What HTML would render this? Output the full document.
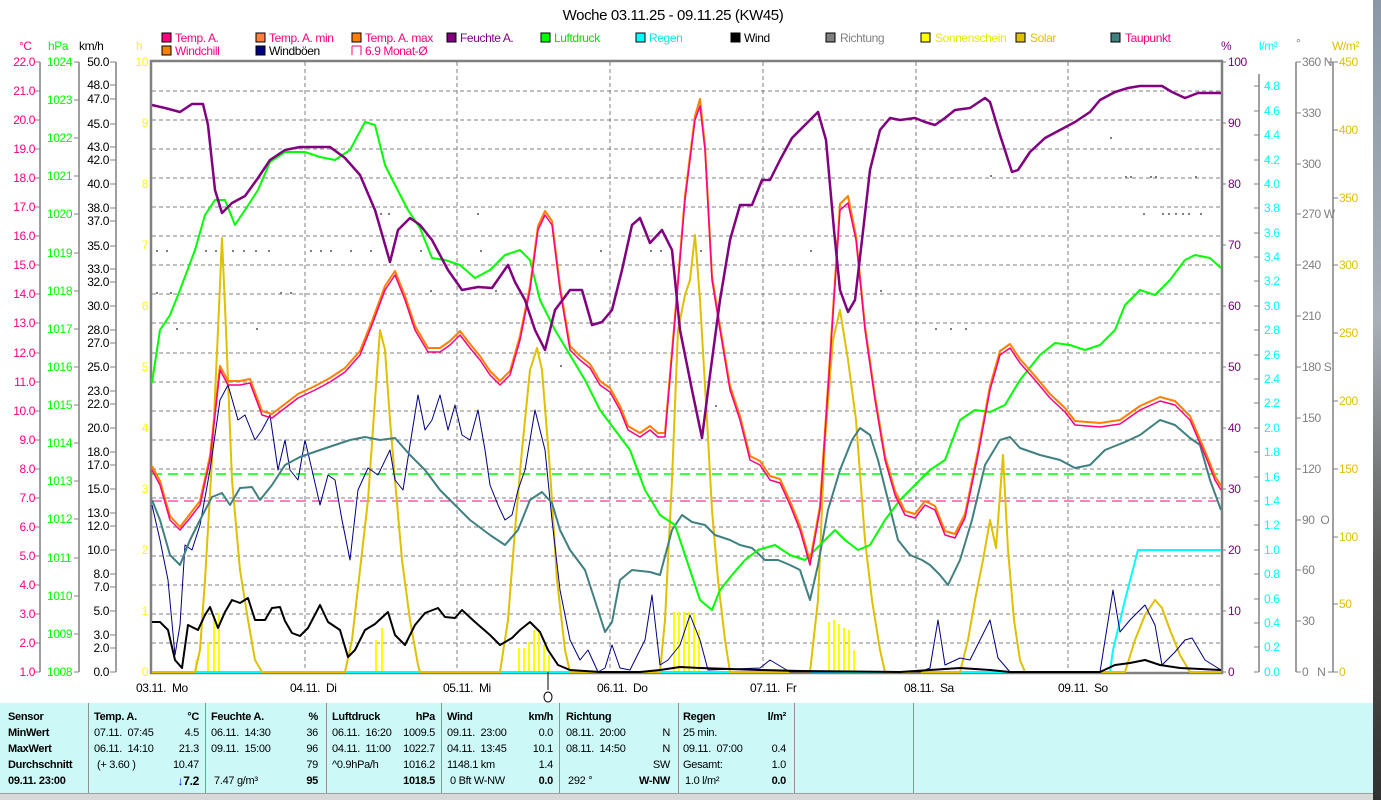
<!DOCTYPE html>
<html><head><meta charset="utf-8"><style>
html,body{margin:0;padding:0;background:#fff;width:1381px;height:800px;overflow:hidden;position:relative}
svg{position:absolute;left:0;top:0}
text{font-family:"Liberation Sans",sans-serif;font-size:12px;letter-spacing:-0.4px}
.tb{position:absolute;left:0;top:703px;width:1373px;height:90px;background:#ccf8f8;font-family:"Liberation Sans",sans-serif;font-size:11px;letter-spacing:-0.3px;color:#000}
.col{position:absolute;top:0;height:90px;border-right:1px solid #909090}
.r{position:absolute;white-space:nowrap}
.b{font-weight:bold}
.foot{position:absolute;left:0;top:793px;width:1373px;height:7px;background:#d8d8d8;border-top:1px solid #a0a0a0}
.photo{position:absolute;left:1373px;top:0;width:8px;height:800px;background:linear-gradient(#8a98a8,#a8b0b8 40%,#5a5a58 70%,#303030)}
</style></head><body>
<svg width="1381" height="800" viewBox="0 0 1381 800">
<text x="673" y="20" text-anchor="middle" style="font-size:15px">Woche 03.11.25 - 09.11.25 (KW45)</text>
<!-- legend -->
<g style="font-size:11px">
<rect x="162" y="33" width="9" height="9" fill="#ff0080" stroke="#000"/><text x="175" y="42" fill="#ff0080">Temp. A.</text>
<rect x="256" y="33" width="9" height="9" fill="#ff8040" stroke="#000"/><text x="269" y="42" fill="#ff0080">Temp. A. min</text>
<rect x="352" y="33" width="9" height="9" fill="#ff8000" stroke="#000"/><text x="365" y="42" fill="#ff0080">Temp. A. max</text>
<rect x="447" y="33" width="9" height="9" fill="#800080" stroke="#000"/><text x="460" y="42" fill="#800080">Feuchte A.</text>
<rect x="541" y="33" width="9" height="9" fill="#00ff00" stroke="#000"/><text x="554" y="42" fill="#00e000">Luftdruck</text>
<rect x="636" y="33" width="9" height="9" fill="#00ffff" stroke="#000"/><text x="649" y="42" fill="#00e8e8">Regen</text>
<rect x="731" y="33" width="9" height="9" fill="#000" stroke="#000"/><text x="744" y="42" fill="#000">Wind</text>
<rect x="826" y="33" width="9" height="9" fill="#808080" stroke="#000"/><text x="840" y="42" fill="#808080">Richtung</text>
<rect x="921" y="33" width="9" height="9" fill="#ffff00" stroke="#000"/><text x="935" y="42" fill="#e8e800">Sonnenschein</text>
<rect x="1016" y="33" width="9" height="9" fill="#e0c000" stroke="#000"/><text x="1030" y="42" fill="#e0c000">Solar</text>
<rect x="1111" y="33" width="9" height="9" fill="#408080" stroke="#000"/><text x="1125" y="42" fill="#ff0080">Taupunkt</text>
<rect x="162" y="46" width="9" height="9" fill="#ff8000" stroke="#000"/><text x="175" y="55" fill="#ff0080">Windchill</text>
<rect x="256" y="46" width="9" height="9" fill="#000080" stroke="#000"/><text x="269" y="55" fill="#000">Windböen</text>
<path d="M352 46h9v9" fill="none" stroke="#ff0080"/><path d="M352 46v9" stroke="#ff0080"/><text x="365" y="55" fill="#ff0080">6.9 Monat-Ø</text>
</g>
<!-- units -->
<g style="font-size:11px">
<text x="19" y="50" fill="#ff0080">°C</text><text x="48" y="50" fill="#00ff00">hPa</text><text x="79" y="50" fill="#000">km/h</text><text x="136" y="50" fill="#ffff00">h</text>
<text x="1221" y="50" fill="#800080">%</text><text x="1259" y="50" fill="#00ffff">l/m²</text><text x="1296" y="47" fill="#808080">°</text><text x="1332" y="50" fill="#e0c000">W/m²</text>
</g>
<!-- grid -->
<g stroke="#808080" stroke-dasharray="4,3" stroke-width="1">
<path d="M152 91H1221M152 120H1221M152 149H1221M152 178H1221M152 207H1221M152 236H1221M152 265H1221M152 294H1221M152 323H1221M152 353H1221M152 382H1221M152 411H1221M152 440H1221M152 469H1221M152 498H1221M152 527H1221M152 556H1221M152 585H1221M152 614H1221M152 643H1221"/>
<path d="M305 62V672M457 62V672M610 62V672M763 62V672M916 62V672M1068 62V672"/>
</g>
<path d="M152 474H1221" stroke="#00ff00" stroke-dasharray="10,6" stroke-width="1.5"/>
<path d="M152 501H1221" stroke="#ff0080" stroke-dasharray="10,6" stroke-width="1"/>
<!-- axes -->
<g stroke="#808080" stroke-width="1.5" fill="none">
<path d="M40 62V672M79 62V672M116 62V672M1259 74V672M1296 62V672M1333 62V672"/>
</g>
<rect x="151" y="61" width="1071" height="612" fill="none" stroke="#808080" stroke-width="2.5"/>
<!-- °C labels -->
<g fill="#ff0080" text-anchor="end">
<text x="35" y="66">22.0</text><text x="35" y="95">21.0</text><text x="35" y="124">20.0</text><text x="35" y="153">19.0</text><text x="35" y="182">18.0</text><text x="35" y="211">17.0</text><text x="35" y="240">16.0</text><text x="35" y="269">15.0</text><text x="35" y="298">14.0</text><text x="35" y="327">13.0</text><text x="35" y="357">12.0</text><text x="35" y="386">11.0</text><text x="35" y="415">10.0</text><text x="35" y="444">9.0</text><text x="35" y="473">8.0</text><text x="35" y="502">7.0</text><text x="35" y="531">6.0</text><text x="35" y="560">5.0</text><text x="35" y="589">4.0</text><text x="35" y="618">3.0</text><text x="35" y="647">2.0</text><text x="35" y="676">1.0</text>
</g>
<g stroke="#808080"><path d="M35 62h5M35 91h5M35 120h5M35 149h5M35 178h5M35 207h5M35 236h5M35 265h5M35 294h5M35 323h5M35 353h5M35 382h5M35 411h5M35 440h5M35 469h5M35 498h5M35 527h5M35 556h5M35 585h5M35 614h5M35 643h5M35 672h5"/>
<path d="M74 62h5M74 100h5M74 138h5M74 176h5M74 214h5M74 253h5M74 291h5M74 329h5M74 367h5M74 405h5M74 443h5M74 481h5M74 519h5M74 558h5M74 596h5M74 634h5M74 672h5"/>
<path d="M110 62h6M110 85h6M110 99h6M110 124h6M110 147h6M110 160h6M110 184h6M110 208h6M110 221h6M110 246h6M110 269h6M110 282h6M110 306h6M110 330h6M110 343h6M110 367h6M110 391h6M110 404h6M110 428h6M110 452h6M110 465h6M110 489h6M110 513h6M110 526h6M110 550h6M110 574h6M110 587h6M110 611h6M110 635h6M110 648h6M110 672h6"/>
<path d="M1221 62h5M1221 123h5M1221 184h5M1221 245h5M1221 306h5M1221 367h5M1221 428h5M1221 489h5M1221 550h5M1221 611h5M1221 672h5"/>
<path d="M1254 86h5M1254 111h5M1254 135h5M1254 160h5M1254 184h5M1254 208h5M1254 233h5M1254 257h5M1254 281h5M1254 306h5M1254 330h5M1254 355h5M1254 379h5M1254 403h5M1254 428h5M1254 452h5M1254 477h5M1254 501h5M1254 525h5M1254 550h5M1254 574h5M1254 599h5M1254 623h5M1254 647h5M1254 672h5"/>
<path d="M1296 62h5M1296 113h5M1296 164h5M1296 214h5M1296 265h5M1296 316h5M1296 367h5M1296 418h5M1296 469h5M1296 520h5M1296 570h5M1296 621h5M1296 672h5"/>
<path d="M1328 62h10M1333 130h5M1333 198h5M1333 265h5M1333 333h5M1333 401h5M1333 469h5M1333 537h5M1333 604h5M1328 672h10"/>
</g>
<g fill="#00ff00">
<text x="47" y="66">1024</text><text x="47" y="104">1023</text><text x="47" y="142">1022</text><text x="47" y="180">1021</text><text x="47" y="218">1020</text><text x="47" y="257">1019</text><text x="47" y="295">1018</text><text x="47" y="333">1017</text><text x="47" y="371">1016</text><text x="47" y="409">1015</text><text x="47" y="447">1014</text><text x="47" y="485">1013</text><text x="47" y="523">1012</text><text x="47" y="562">1011</text><text x="47" y="600">1010</text><text x="47" y="638">1009</text><text x="47" y="676">1008</text>
</g>
<g fill="#000" text-anchor="end">
<text x="109" y="66">50.0</text><text x="109" y="89">48.0</text><text x="109" y="103">47.0</text><text x="109" y="128">45.0</text><text x="109" y="151">43.0</text><text x="109" y="164">42.0</text><text x="109" y="188">40.0</text><text x="109" y="212">38.0</text><text x="109" y="225">37.0</text><text x="109" y="250">35.0</text><text x="109" y="273">33.0</text><text x="109" y="286">32.0</text><text x="109" y="310">30.0</text><text x="109" y="334">28.0</text><text x="109" y="347">27.0</text><text x="109" y="371">25.0</text><text x="109" y="395">23.0</text><text x="109" y="408">22.0</text><text x="109" y="432">20.0</text><text x="109" y="456">18.0</text><text x="109" y="469">17.0</text><text x="109" y="493">15.0</text><text x="109" y="517">13.0</text><text x="109" y="530">12.0</text><text x="109" y="554">10.0</text><text x="109" y="578">8.0</text><text x="109" y="591">7.0</text><text x="109" y="615">5.0</text><text x="109" y="639">3.0</text><text x="109" y="652">2.0</text><text x="109" y="676">0.0</text>
</g>
<g fill="#ffff00" text-anchor="end" style="font-size:11px">
<text x="148" y="66">10</text><text x="148" y="127">9</text><text x="148" y="188">8</text><text x="148" y="249">7</text><text x="148" y="310">6</text><text x="148" y="371">5</text><text x="148" y="432">4</text><text x="148" y="493">3</text><text x="148" y="554">2</text><text x="148" y="615">1</text><text x="148" y="676">0</text>
</g>
<g fill="#800080">
<text x="1228" y="66">100</text><text x="1228" y="127">90</text><text x="1228" y="188">80</text><text x="1228" y="249">70</text><text x="1228" y="310">60</text><text x="1228" y="371">50</text><text x="1228" y="432">40</text><text x="1228" y="493">30</text><text x="1228" y="554">20</text><text x="1228" y="615">10</text><text x="1228" y="676">0</text>
</g>
<g fill="#00ffff">
<text x="1264" y="90">4.8</text><text x="1264" y="115">4.6</text><text x="1264" y="139">4.4</text><text x="1264" y="164">4.2</text><text x="1264" y="188">4.0</text><text x="1264" y="212">3.8</text><text x="1264" y="237">3.6</text><text x="1264" y="261">3.4</text><text x="1264" y="285">3.2</text><text x="1264" y="310">3.0</text><text x="1264" y="334">2.8</text><text x="1264" y="359">2.6</text><text x="1264" y="383">2.4</text><text x="1264" y="407">2.2</text><text x="1264" y="432">2.0</text><text x="1264" y="456">1.8</text><text x="1264" y="481">1.6</text><text x="1264" y="505">1.4</text><text x="1264" y="529">1.2</text><text x="1264" y="554">1.0</text><text x="1264" y="578">0.8</text><text x="1264" y="603">0.6</text><text x="1264" y="627">0.4</text><text x="1264" y="651">0.2</text><text x="1264" y="676">0.0</text>
</g>
<g fill="#808080">
<text x="1302" y="66">360 N</text><text x="1302" y="117">330</text><text x="1302" y="168">300</text><text x="1302" y="218">270 W</text><text x="1302" y="269">240</text><text x="1302" y="320">210</text><text x="1302" y="371">180 S</text><text x="1302" y="422">150</text><text x="1302" y="473">120</text><text x="1302" y="524">90 &#160;O</text><text x="1302" y="574">60</text><text x="1302" y="625">30</text><text x="1302" y="676">0 &#160;&#160;N</text>
</g>
<g fill="#e0c000">
<text x="1339" y="66">450</text><text x="1339" y="134">400</text><text x="1339" y="202">350</text><text x="1339" y="269">300</text><text x="1339" y="337">250</text><text x="1339" y="405">200</text><text x="1339" y="473">150</text><text x="1339" y="541">100</text><text x="1339" y="608">50</text><text x="1339" y="676">0</text>
</g>
<!-- direction dots -->
<g fill="#808080">
<rect x="156" y="250" width="2" height="2"/><rect x="166" y="250" width="2" height="2"/><rect x="176" y="328" width="2" height="2"/><rect x="156" y="292" width="2" height="2"/><rect x="170" y="292" width="2" height="2"/><rect x="205" y="250" width="2" height="2"/><rect x="215" y="250" width="2" height="2"/><rect x="232" y="250" width="2" height="2"/><rect x="243" y="250" width="2" height="2"/><rect x="255" y="250" width="2" height="2"/><rect x="268" y="250" width="2" height="2"/><rect x="256" y="328" width="2" height="2"/><rect x="280" y="292" width="2" height="2"/><rect x="290" y="292" width="2" height="2"/><rect x="310" y="250" width="2" height="2"/><rect x="320" y="250" width="2" height="2"/><rect x="330" y="250" width="2" height="2"/><rect x="350" y="250" width="2" height="2"/><rect x="370" y="250" width="2" height="2"/><rect x="380" y="213" width="2" height="2"/><rect x="388" y="213" width="2" height="2"/><rect x="420" y="250" width="2" height="2"/><rect x="430" y="290" width="2" height="2"/><rect x="477" y="213" width="2" height="2"/><rect x="480" y="250" width="2" height="2"/><rect x="495" y="290" width="2" height="2"/><rect x="520" y="250" width="2" height="2"/><rect x="560" y="365" width="2" height="2"/><rect x="600" y="250" width="2" height="2"/><rect x="650" y="250" width="2" height="2"/><rect x="660" y="250" width="2" height="2"/><rect x="700" y="250" width="2" height="2"/><rect x="715" y="405" width="2" height="2"/><rect x="810" y="250" width="2" height="2"/><rect x="880" y="290" width="2" height="2"/><rect x="935" y="328" width="2" height="2"/><rect x="950" y="328" width="2" height="2"/><rect x="965" y="328" width="2" height="2"/><rect x="990" y="175" width="2" height="2"/><rect x="1110" y="137" width="2" height="2"/><rect x="1125" y="176" width="2" height="2"/><rect x="1130" y="176" width="2" height="2"/><rect x="1150" y="176" width="2" height="2"/><rect x="1155" y="176" width="2" height="2"/><rect x="1195" y="176" width="2" height="2"/><rect x="1143" y="213" width="2" height="2"/><rect x="1162" y="213" width="2" height="2"/><rect x="1168" y="213" width="2" height="2"/><rect x="1175" y="213" width="2" height="2"/><rect x="1182" y="213" width="2" height="2"/><rect x="1188" y="213" width="2" height="2"/><rect x="1200" y="213" width="2" height="2"/>
</g>
<!-- sunshine bars -->
<g stroke="#ffff00" stroke-width="2">
<path d="M196 672V660M208 672V642M214 672V616M219 672V613M376 672V640M382 672V628M519 672V648M524 672V648M529 672V642M534 672V630M539 672V632M544 672V645M549 672V655M674 672V612M679 672V612M684 672V612M689 672V612M694 672V614M699 672V630M829 672V622M834 672V620M839 672V624M844 672V628M849 672V630M854 672V650"/>
</g>
<g fill="none" stroke-linejoin="round">
<!-- rain -->
<polyline stroke="#00ffff" stroke-width="2" points="152,672 1110,672 1113,650 1125,600 1138,550 1221,550"/>
<!-- solar -->
<polyline stroke="#e0c000" stroke-width="2" points="152,672 195,672 200,650 205,580 212,460 218,330 222,238 226,330 232,480 240,570 248,620 255,660 262,672 345,672 352,640 360,570 368,500 375,400 380,330 385,350 390,420 395,480 402,560 410,620 418,665 420,672 500,672 508,620 515,530 522,450 530,370 537,348 542,370 550,470 557,580 565,650 570,672 660,672 665,620 672,480 678,330 685,295 690,280 695,235 700,300 707,420 712,510 718,580 725,640 730,672 810,672 818,600 825,440 833,340 840,310 848,360 856,420 865,540 872,600 880,650 885,672 960,672 968,640 975,600 983,560 990,520 996,548 1003,455 1008,550 1014,620 1020,660 1025,672 1125,672 1135,640 1145,615 1155,600 1162,608 1170,630 1180,655 1190,672 1221,672"/>
<!-- gust -->
<polyline stroke="#000080" stroke-width="1" points="152,505 160,540 168,580 175,655 180,625 185,545 192,550 200,525 210,470 220,400 228,385 238,420 245,415 255,440 262,430 270,415 278,470 285,440 290,470 298,480 305,440 312,470 320,505 328,475 335,480 342,520 350,560 358,490 368,468 378,475 390,450 395,480 403,490 410,445 418,395 425,430 432,420 440,395 448,430 455,405 462,435 470,440 478,410 485,450 490,485 498,505 505,520 512,515 518,490 525,470 535,410 545,450 552,520 560,590 570,640 580,660 588,650 598,672 605,668 612,645 620,668 630,670 645,640 652,595 660,665 668,660 680,645 690,615 700,640 708,670 760,668 770,660 790,672 920,672 930,668 938,620 945,665 960,658 970,660 980,640 990,620 998,658 1010,672 1100,672 1113,590 1120,632 1130,620 1145,605 1155,625 1162,665 1175,652 1185,640 1192,638 1205,660 1221,670"/>
<!-- dew point -->
<polyline stroke="#408080" stroke-width="2" points="152,500 160,520 170,555 180,565 190,540 200,520 212,497 222,493 230,505 240,488 252,487 260,500 272,485 285,465 300,457 320,450 335,445 350,440 365,437 380,440 395,438 410,455 425,470 440,490 455,505 470,520 490,535 505,545 518,530 530,500 542,492 552,503 560,530 570,550 585,570 598,610 605,632 612,622 620,580 632,570 650,572 660,575 672,530 682,515 692,522 705,525 715,535 730,540 740,545 752,548 765,560 778,560 790,565 800,570 810,600 818,565 828,510 840,470 852,440 860,428 870,435 878,460 888,500 898,540 910,555 922,560 930,565 940,575 948,585 960,560 972,520 985,465 1000,440 1010,437 1020,448 1040,455 1060,460 1075,468 1090,465 1105,450 1125,442 1140,435 1160,420 1175,425 1190,438 1200,445 1210,480 1221,510"/>
<!-- pressure -->
<polyline stroke="#00ff00" stroke-width="2" points="152,383 160,330 170,315 180,290 195,250 205,215 215,200 225,200 235,225 245,210 258,190 270,162 285,152 305,152 320,157 335,160 350,150 365,122 375,125 385,165 395,185 408,210 420,228 432,258 445,260 460,265 475,278 490,270 505,255 520,250 530,260 540,300 555,330 570,355 585,380 600,410 615,430 630,450 645,490 660,515 675,525 690,570 700,600 712,610 720,590 732,575 745,560 758,550 775,545 790,555 805,560 820,545 835,530 845,540 858,550 870,545 885,520 900,500 915,485 930,470 945,460 960,420 975,410 990,412 1005,405 1020,380 1040,355 1055,343 1070,345 1085,350 1100,345 1115,330 1125,305 1140,290 1155,295 1170,280 1185,260 1195,255 1210,258 1221,268"/>
<!-- temp -->
<polyline stroke="#ff8000" stroke-width="2" points="152,466 160,481 170,516 180,527 190,514 200,501 210,456 220,366 228,381 240,381 250,379 262,411 272,414 285,404 298,394 315,386 330,378 345,368 360,351 372,321 385,286 395,271 405,296 415,326 428,348 440,348 450,341 460,331 470,344 480,356 490,371 500,381 510,371 520,336 530,286 538,226 545,211 552,221 560,286 570,346 580,356 590,364 600,381 610,388 620,406 628,426 640,433 650,426 658,433 665,433 675,316 685,196 695,116 700,99 705,146 712,276 720,326 730,386 740,416 750,456 760,461 770,476 780,479 790,501 800,526 810,561 820,506 830,356 840,204 848,196 856,236 865,326 875,396 885,456 895,491 905,511 915,514 925,501 935,506 945,531 955,534 965,514 978,451 990,386 1000,351 1010,344 1020,359 1035,376 1050,394 1065,408 1075,421 1100,423 1120,420 1140,406 1160,397 1175,401 1190,416 1205,451 1215,476 1221,486"/>
<polyline stroke="#ff0080" stroke-width="1.5" points="152,470 160,485 170,520 180,530 190,518 200,505 210,460 220,370 228,385 240,385 250,383 262,415 272,418 285,408 298,398 315,390 330,382 345,372 360,355 372,325 385,290 395,275 405,300 415,330 428,352 440,352 450,345 460,335 470,348 480,360 490,375 500,385 510,375 520,340 530,290 538,230 545,215 552,225 560,290 570,350 580,360 590,368 600,385 610,392 620,410 628,430 640,437 650,430 658,437 665,437 675,320 685,200 695,120 700,106 705,150 712,280 720,330 730,390 740,420 750,460 760,465 770,480 780,483 790,505 800,530 810,565 820,510 830,360 840,210 848,203 856,240 865,330 875,400 885,460 895,495 905,515 915,518 925,505 935,510 945,535 955,538 965,518 978,455 990,390 1000,355 1010,348 1020,363 1035,380 1050,398 1065,412 1075,425 1100,427 1120,424 1140,410 1160,401 1175,405 1190,420 1205,455 1215,480 1221,490"/>
<!-- wind -->
<polyline stroke="#000" stroke-width="2" points="152,622 160,622 168,630 175,660 182,668 188,625 198,630 205,615 210,607 218,628 225,612 232,600 240,603 248,598 255,620 265,620 272,608 280,607 285,621 292,633 300,636 308,628 320,605 328,622 340,630 348,657 355,650 365,630 375,624 388,612 395,635 405,645 415,625 425,613 438,608 445,617 455,618 462,610 475,622 490,635 500,645 512,638 520,630 530,622 540,632 548,650 558,665 570,670 600,672 640,672 660,670 680,667 700,668 760,670 800,671 900,672 960,668 990,670 1010,672 1100,672 1115,665 1130,663 1145,660 1160,665 1180,668 1221,670"/>
<!-- humidity -->
<polyline stroke="#800080" stroke-width="2.5" points="152,105 165,108 180,112 192,104 203,104 208,125 215,190 222,213 232,203 245,196 258,178 270,160 285,150 300,147 330,147 345,158 360,175 375,210 390,262 398,230 410,218 420,225 432,240 448,270 462,290 478,287 492,288 508,265 515,282 525,300 535,330 545,350 555,310 570,290 582,290 592,325 602,322 612,310 622,270 632,225 640,218 650,243 662,230 672,250 680,330 692,390 702,438 710,375 720,300 730,240 740,205 752,205 762,180 770,180 780,160 792,138 805,125 818,112 826,140 834,230 840,290 848,312 855,300 862,240 870,170 880,130 890,118 900,120 915,118 925,122 935,125 945,118 955,110 970,108 985,98 990,102 1000,135 1012,172 1018,170 1030,152 1045,138 1060,130 1075,122 1090,112 1100,100 1115,92 1128,88 1140,86 1162,86 1172,92 1185,98 1198,93 1221,93"/>
</g>
<path d="M548 672v18" stroke="#000"/>
<!-- x labels -->
<g fill="#000">
<text x="136" y="692">03.11.&#160; Mo</text><text x="290" y="692">04.11.&#160; Di</text><text x="443" y="692">05.11.&#160; Mi</text><text x="597" y="692">06.11.&#160; Do</text><text x="750" y="692">07.11.&#160; Fr</text><text x="904" y="692">08.11.&#160; Sa</text><text x="1058" y="692">09.11.&#160; So</text>
</g>
<ellipse cx="548" cy="697" rx="4" ry="5" fill="none" stroke="#000"/>
</svg>
<div class="tb">
<div class="col" style="left:0;width:88px"><div class="r b" style="left:8px;top:8px">Sensor</div><div class="r b" style="left:8px;top:24px">MinWert</div><div class="r b" style="left:8px;top:40px">MaxWert</div><div class="r b" style="left:8px;top:56px">Durchschnitt</div><div class="r b" style="left:8px;top:72px">09.11. 23:00</div></div>
<div class="col" style="left:89px;width:116px"><div class="r b" style="left:5px;top:8px">Temp. A.</div><div class="r b" style="right:6px;top:8px">°C</div><div class="r" style="left:5px;top:24px">07.11.&#160; 07:45</div><div class="r" style="right:6px;top:24px">4.5</div><div class="r" style="left:5px;top:40px">06.11.&#160; 14:10</div><div class="r" style="right:6px;top:40px">21.3</div><div class="r" style="left:8px;top:56px">(+ 3.60 )</div><div class="r" style="right:6px;top:56px">10.47</div><div class="r b" style="right:6px;top:71px;font-size:12px"><span style="color:#0000ff">↓</span>7.2</div></div>
<div class="col" style="left:206px;width:120px"><div class="r b" style="left:5px;top:8px">Feuchte A.</div><div class="r b" style="right:8px;top:8px">%</div><div class="r" style="left:5px;top:24px">06.11.&#160; 14:30</div><div class="r" style="right:8px;top:24px">36</div><div class="r" style="left:5px;top:40px">09.11.&#160; 15:00</div><div class="r" style="right:8px;top:40px">96</div><div class="r" style="right:8px;top:56px">79</div><div class="r" style="left:8px;top:72px">7.47 g/m³</div><div class="r b" style="right:8px;top:72px">95</div></div>
<div class="col" style="left:327px;width:114px"><div class="r b" style="left:5px;top:8px">Luftdruck</div><div class="r b" style="right:6px;top:8px">hPa</div><div class="r" style="left:5px;top:24px">06.11.&#160; 16:20</div><div class="r" style="right:6px;top:24px">1009.5</div><div class="r" style="left:5px;top:40px">04.11.&#160; 11:00</div><div class="r" style="right:6px;top:40px">1022.7</div><div class="r" style="left:5px;top:56px">^0.9hPa/h</div><div class="r" style="right:6px;top:56px">1016.2</div><div class="r b" style="right:6px;top:72px">1018.5</div></div>
<div class="col" style="left:442px;width:117px"><div class="r b" style="left:5px;top:8px">Wind</div><div class="r b" style="right:6px;top:8px">km/h</div><div class="r" style="left:5px;top:24px">09.11.&#160; 23:00</div><div class="r" style="right:6px;top:24px">0.0</div><div class="r" style="left:5px;top:40px">04.11.&#160; 13:45</div><div class="r" style="right:6px;top:40px">10.1</div><div class="r" style="left:5px;top:56px">1148.1 km</div><div class="r" style="right:6px;top:56px">1.4</div><div class="r" style="left:8px;top:72px">0 Bft W-NW</div><div class="r b" style="right:6px;top:72px">0.0</div></div>
<div class="col" style="left:560px;width:118px"><div class="r b" style="left:6px;top:8px">Richtung</div><div class="r" style="left:6px;top:24px">08.11.&#160; 20:00</div><div class="r" style="right:8px;top:24px">N</div><div class="r" style="left:6px;top:40px">08.11.&#160; 14:50</div><div class="r" style="right:8px;top:40px">N</div><div class="r" style="right:8px;top:56px">SW</div><div class="r" style="left:8px;top:72px">292 °</div><div class="r b" style="right:8px;top:72px">W-NW</div></div>
<div class="col" style="left:679px;width:115px"><div class="r b" style="left:4px;top:8px">Regen</div><div class="r b" style="right:8px;top:8px">l/m²</div><div class="r" style="left:4px;top:24px">25 min.</div><div class="r" style="left:4px;top:40px">09.11.&#160; 07:00</div><div class="r" style="right:8px;top:40px">0.4</div><div class="r" style="left:4px;top:56px">Gesamt:</div><div class="r" style="right:8px;top:56px">1.0</div><div class="r" style="left:6px;top:72px">1.0 l/m²</div><div class="r b" style="right:8px;top:72px">0.0</div></div>
<div class="col" style="left:795px;width:118px"></div>
</div>
<div class="foot"></div>
<div class="photo"></div>
</body></html>
